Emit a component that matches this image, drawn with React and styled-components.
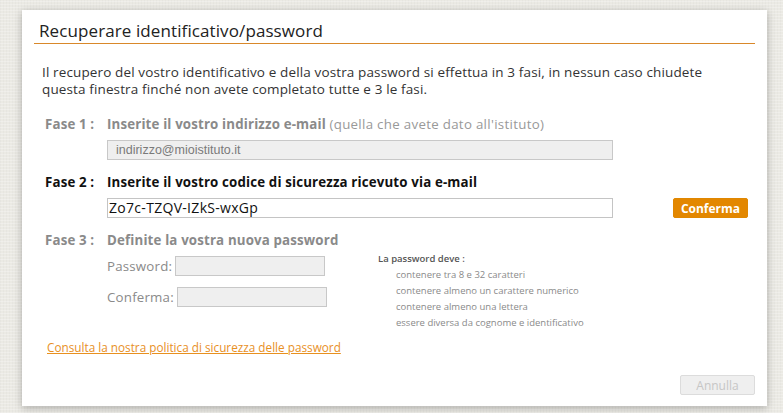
import React from 'react'
import styled, { createGlobalStyle } from 'styled-components'

const GlobalStyle = createGlobalStyle`
	html, body {
		margin: 0;
		padding: 0;
	}
	body {
		font-family: 'Open Sans', 'Noto Sans', sans-serif;
		background-color: #ebeae4;
		background-image:
			repeating-linear-gradient(0deg, rgba(255,255,255,0.25) 0 1px, transparent 1px 3px),
			repeating-linear-gradient(90deg, rgba(0,0,0,0.02) 0 1px, transparent 1px 3px);
	}
`

const Page = styled.div`
	width: 783px;
	height: 413px;
	padding: 10px 0 0 22px;
	box-sizing: border-box;
`

const Dialog = styled.div`
	width: 745px;
	height: 396px;
	box-sizing: border-box;
	background: #fff;
	padding: 0 12px;
	box-shadow: 0 2px 8px rgba(0, 0, 0, 0.28);
	display: flex;
	flex-direction: column;
`

const Header = styled.div`
	padding: 9px 0 0 5px;
	height: 34px;
	box-sizing: border-box;
	border-bottom: 1px solid #d9882a;
`

const Title = styled.h1`
	margin: 0;
	font-size: 17px;
	font-weight: 400;
	line-height: 24px;
	color: #222;
	letter-spacing: 0.1px;
`

const Intro = styled.p`
	margin: 20px 0 0 8px;
	font-size: 13.5px;
	letter-spacing: 0.13px;
	line-height: 17px;
	color: #333;
`

const Steps = styled.div`
	margin-left: 11px;
`

const StepHead = styled.div`
	display: flex;
	margin-top: ${p => p.gap || 14}px;
	font-size: 13.3px;
	letter-spacing: 0.15px;
	line-height: 17px;
	font-weight: 700;
	color: ${p => (p.active ? '#111' : '#8a8a8a')};
`

const StepNum = styled.span`
	width: 62px;
	flex: none;
`

const Hint = styled.span`
	font-weight: 400;
	color: #999;
	letter-spacing: 0.3px;
`

const FieldRow = styled.div`
	display: flex;
	align-items: center;
	margin: 7px 0 0 62px;
`

const TextBox = styled.div`
	width: 506px;
	height: 20px;
	box-sizing: border-box;
	border: 1px solid ${p => (p.disabled ? '#c8c8c8' : '#c4c4c4')};
	background: ${p => (p.disabled ? '#efefef' : '#fff')};
	padding: ${p => (p.disabled ? '0 0 0 8px' : '0 0 0 1px')};
	font-family: ${p => (p.disabled ? "'Liberation Sans', Arial, sans-serif" : "'Open Sans', sans-serif")};
	font-size: ${p => (p.disabled ? '12.5px' : '14px')};
	letter-spacing: ${p => (p.disabled ? '0' : '0.3px')};
	line-height: 18px;
	color: ${p => (p.disabled ? '#7a7a7a' : '#111')};
`

const Button = styled.button`
	font-family: 'Open Sans', sans-serif;
	height: 20px;
	padding: 0;
	width: ${p => p.width}px;
	border-radius: 2px;
	font-size: 12px;
	cursor: pointer;
	border: 1px solid ${p => (p.primary ? '#e08700' : '#dcdcdc')};
	background: ${p => (p.primary ? '#e38700' : '#efefef')};
	color: ${p => (p.primary ? '#fff' : '#c6c6c6')};
	font-weight: ${p => (p.primary ? 700 : 400)};
`

const ConfirmButton = styled(Button)`
	margin-left: 60px;
`

const PasswordArea = styled.div`
	display: flex;
	margin: 2px 0 0 62px;
`

const PasswordForm = styled.div`
	width: 271px;
	flex: none;
	padding-top: 5px;
`

const PwRow = styled.div`
	display: flex;
	align-items: center;
	margin-top: ${p => p.gap || 0}px;
	font-size: 13.3px;
	letter-spacing: 0.2px;
	color: #8a8a8a;
`

const PwInput = styled.div`
	width: 150px;
	height: 20px;
	box-sizing: border-box;
	border: 1px solid #c8c8c8;
	background: #efefef;
	margin-left: 3px;
`

const Rules = styled.div`
	font-size: 9.5px;
	line-height: 16px;
	color: #8a8a8a;
`

const RulesTitle = styled.div`
	font-weight: 600;
	color: #555;
`

const Rule = styled.div`
	padding-left: 18px;
`

const PolicyLink = styled.a`
	display: block;
	margin: 8px 0 0 13px;
	font-size: 11.75px;
	line-height: 17px;
	color: #e8901f;
	text-decoration: underline;
`

const Footer = styled.div`
	margin-top: auto;
	display: flex;
	justify-content: flex-end;
	padding-bottom: 11px;
`

export default function App() {
	return (
		<>
			<GlobalStyle />
			<Page>
				<Dialog>
					<Header>
						<Title>Recuperare identificativo/password</Title>
					</Header>
					<Intro>
						Il recupero del vostro identificativo e della vostra password si effettua in 3 fasi, in nessun caso chiudete
						<br />
						questa finestra finché non avete completato tutte e 3 le fasi.
					</Intro>
					<Steps>
						<StepHead gap={18}>
							<StepNum>Fase 1 :</StepNum>
							<span>
								Inserite il vostro indirizzo e-mail <Hint>(quella che avete dato all'istituto)</Hint>
							</span>
						</StepHead>
						<FieldRow>
							<TextBox disabled>indirizzo@mioistituto.it</TextBox>
						</FieldRow>
						<StepHead active>
							<StepNum>Fase 2 :</StepNum>
							<span>Inserite il vostro codice di sicurezza ricevuto via e-mail</span>
						</StepHead>
						<FieldRow>
							<TextBox>Zo7c-TZQV-IZkS-wxGp</TextBox>
							<ConfirmButton primary width={75}>Conferma</ConfirmButton>
						</FieldRow>
						<StepHead>
							<StepNum>Fase 3 :</StepNum>
							<span>Definite la vostra nuova password</span>
						</StepHead>
						<PasswordArea>
							<PasswordForm>
								<PwRow>
									Password:<PwInput />
								</PwRow>
								<PwRow gap={11}>
									Conferma:<PwInput />
								</PwRow>
							</PasswordForm>
							<Rules>
								<RulesTitle>La password deve :</RulesTitle>
								<Rule>contenere tra 8 e 32 caratteri</Rule>
								<Rule>contenere almeno un carattere numerico</Rule>
								<Rule>contenere almeno una lettera</Rule>
								<Rule>essere diversa da cognome e identificativo</Rule>
							</Rules>
						</PasswordArea>
					</Steps>
					<PolicyLink href="#">Consulta la nostra politica di sicurezza delle password</PolicyLink>
					<Footer>
						<Button width={75}>Annulla</Button>
					</Footer>
				</Dialog>
			</Page>
		</>
	)
}
